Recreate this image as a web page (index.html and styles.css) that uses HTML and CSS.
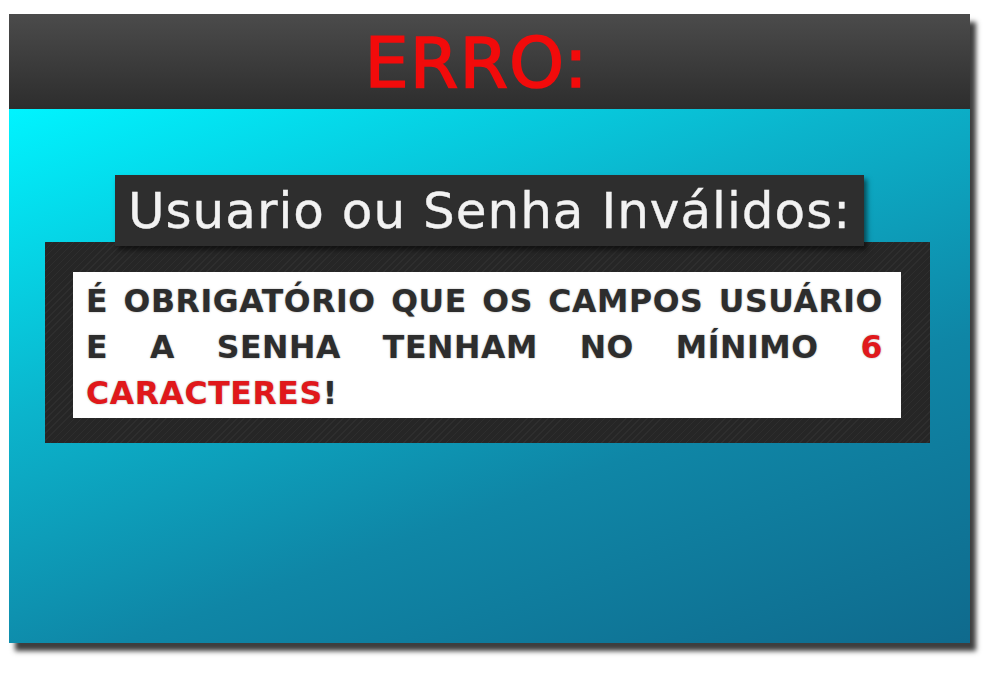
FILE: index.html
```html
<!DOCTYPE html>
<html lang="pt-BR">
<head>
<meta charset="utf-8">
<title>Erro</title>
<link rel="stylesheet" href="styles.css">
</head>
<body>
<div class="card">
  <header class="card-header">
    <h1 class="error-title">ERRO:</h1>
  </header>
  <main class="card-body">
    <div class="subtitle-box">
      <h2 class="subtitle">Usuario ou Senha Inválidos:</h2>
    </div>
    <div class="message-frame">
      <p class="message">É OBRIGATÓRIO QUE OS CAMPOS USUÁRIO E A SENHA TENHAM NO MÍNIMO <span class="hl">6 CARACTERES</span>!</p>
    </div>
  </main>
</div>
</body>
</html>
```
FILE: styles.css
```css
html, body {
  margin: 0;
  padding: 0;
  background: #ffffff;
}
body {
  width: 992px;
  height: 674px;
  overflow: hidden;
  font-family: "DejaVu Sans", "Liberation Sans", sans-serif;
}
.card {
  margin: 14px 0 0 9px;
  width: 961px;
  height: 629px;
  display: flex;
  flex-direction: column;
  box-shadow: 6px 8px 5px #3e3e3e;
}
.card-header {
  height: 95px;
  flex: 0 0 95px;
  background: linear-gradient(to bottom, #4b4b4b 0%, #2d2d2d 100%);
  display: flex;
  justify-content: center;
  align-items: center;
}
.error-title {
  margin: 2px 0 0 -26px;
  font-weight: normal;
  font-size: 70px;
  line-height: 1;
  color: #f20b0b;
  -webkit-text-stroke: 1.6px #f20b0b;
  letter-spacing: 1px;
}
.card-body {
  flex: 1;
  background: linear-gradient(160deg, #00f4ff 0%, #0bb4cc 35%, #0f86a6 65%, #0f6a8d 100%);
  display: flex;
  flex-direction: column;
  align-items: center;
  padding-top: 66px;
}
.subtitle-box {
  position: relative;
  z-index: 2;
  width: 749px;
  height: 71px;
  margin-bottom: -4px;
  background: #2e2e2e;
  box-shadow: 3px 4px 5px rgba(0, 0, 0, 0.55);
  display: flex;
  align-items: center;
  justify-content: center;
}
.subtitle {
  margin: 0 0 0 0;
  font-weight: normal;
  font-size: 50px;
  line-height: 1;
  color: #f2f2f2;
  -webkit-text-stroke: 0.4px #f2f2f2;
  letter-spacing: 1px;
}
.message-frame {
  align-self: flex-start;
  margin-left: 36px;
  width: 885px;
  box-sizing: border-box;
  padding: 30px 29px 25px 28px;
  background-color: #262626;
  background-image: repeating-linear-gradient(135deg, rgba(255,255,255,0.035) 0px, rgba(255,255,255,0.035) 1px, transparent 1px, transparent 5px);
}
.message {
  margin: 0;
  background: #ffffff;
  height: 146px;
  box-sizing: border-box;
  padding: 6px 18px 0 13px;
  font-weight: bold;
  font-size: 31.5px;
  line-height: 46px;
  letter-spacing: 0.6px;
  color: #2d2d2d;
  text-align: justify;
  text-shadow: 0 0 2px rgba(0, 0, 0, 0.35);
}
.hl {
  color: #e0181b;
}
```
